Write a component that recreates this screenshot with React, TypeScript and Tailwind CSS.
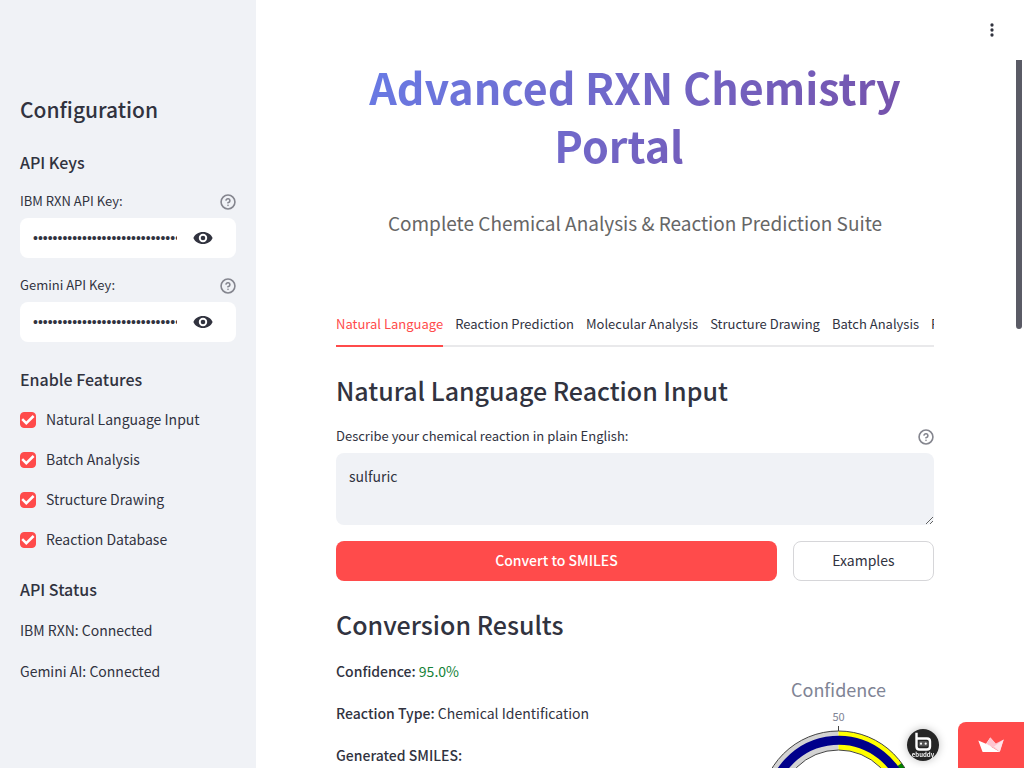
import { useState } from "react";
import type { ReactNode } from "react";

const tabs = [
  "Natural Language",
  "Reaction Prediction",
  "Molecular Analysis",
  "Structure Drawing",
  "Batch Analysis",
  "Reaction Database",
];

const features = [
  "Natural Language Input",
  "Batch Analysis",
  "Structure Drawing",
  "Reaction Database",
];

function HelpButton({ label }: { label: string }) {
  return (
    <button type="button" aria-label={label} className="flex pt-[2px] text-[#84858e]">
      <svg
        className="size-4"
        viewBox="0 0 24 24"
        fill="none"
        stroke="currentColor"
        strokeWidth="2.4"
        strokeLinecap="round"
        strokeLinejoin="round"
      >
        <circle cx="12" cy="12" r="10.4" />
        <path d="M9.1 9a3 3 0 0 1 5.8 1c0 2-3 3-3 3" />
        <path d="M12 17h.01" />
      </svg>
    </button>
  );
}

function SideHeading({ children }: { children: ReactNode }) {
  return <h3 className="text-base leading-6 font-medium">{children}</h3>;
}

function PasswordField({ id, label }: { id: string; label: string }) {
  const [shown, setShown] = useState(false);
  return (
    <div>
      <div className="flex h-5 items-center justify-between">
        <label htmlFor={id} className="text-[13px] leading-5">
          {label}
        </label>
        <HelpButton label={`Help for ${label}`} />
      </div>
      <div className="mt-[7px] flex h-10 items-center rounded-lg bg-white pr-[23px] pl-[13px]">
        <input
          id={id}
          type={shown ? "text" : "password"}
          defaultValue="0000000000000000000000000000000000000000"
          className="min-w-0 flex-1 bg-transparent font-['Liberation_Sans',sans-serif] text-sm outline-none"
        />
        <button
          type="button"
          aria-label="Show password text"
          onClick={() => setShown(!shown)}
          className="ml-4 flex"
        >
          <svg className="h-3 w-5" viewBox="0 0 20 12">
            <path
              fill="currentColor"
              fillRule="evenodd"
              d="M10 0C5.400 0 1.800 2.400 0.400 6C1.800 9.600 5.400 12 10 12S18.200 9.600 19.600 6C18.200 2.400 14.600 0 10 0ZM10 10.200A4.200 4.200 0 1 1 10 1.800A4.200 4.200 0 0 1 10 10.200ZM10 3.700A2.300 2.300 0 1 0 10 8.300A2.300 2.300 0 0 0 10 3.700Z"
            />
          </svg>
        </button>
      </div>
    </div>
  );
}

function Feature({ label }: { label: string }) {
  return (
    <label className="flex h-6 items-start gap-[10px] text-sm leading-[22px]">
      <span className="mt-1 grid">
        <input
          type="checkbox"
          defaultChecked
          className="peer col-start-1 row-start-1 size-4 appearance-none rounded-sm border border-gray-300 bg-white checked:border-[#ff4b4b] checked:bg-[#ff4b4b]"
        />
        <svg
          className="pointer-events-none invisible col-start-1 row-start-1 size-4 peer-checked:visible"
          viewBox="0 0 16 16"
          fill="none"
          stroke="white"
          strokeWidth="2.5"
        >
          <path d="M2.200 7.200L6.300 11.200L13.600 4" />
        </svg>
      </span>
      {label}
    </label>
  );
}

function Gauge() {
  return (
    <svg
      role="img"
      aria-label="Confidence gauge"
      className="h-[200px] w-full"
      viewBox="0 -1 194 200"
    >
      <text x="98.500" y="37" textAnchor="middle" fontSize="18" fill="#808495">
        Confidence
      </text>
      <text x="98.500" y="61" textAnchor="middle" fontSize="11" fill="#808495">
        50
      </text>
      <path d="M98.500 66V71" stroke="#444" />
      <g fill="none" strokeWidth="19">
        <path d="M30 149A68.500 68.500 0 0 1 98.500 80.500" stroke="#d3d3d3" />
        <path d="M98.500 80.500A68.500 68.500 0 0 1 153.900 108.700" stroke="#ffff00" />
        <path d="M153.900 108.700A68.500 68.500 0 0 1 167 149" stroke="#008000" />
      </g>
      <path
        d="M30 149A68.500 68.500 0 0 1 166.200 138.300"
        fill="none"
        stroke="#00008b"
        strokeWidth="9"
      />
      <path
        d="M20.500 149A78 78 0 0 1 176.500 149H157.500A59 59 0 0 0 39.500 149Z"
        fill="none"
        stroke="#444"
      />
    </svg>
  );
}

export default function App() {
  const [active, setActive] = useState(0);
  return (
    <div className="flex h-screen overflow-hidden bg-white font-['Noto_Sans_CJK_JP',sans-serif] text-[#31333f]">
      <aside className="w-64 shrink-0 bg-[#f0f2f6] px-5 pt-[93px]">
        <h2 className="text-[21px] leading-8 font-medium">Configuration</h2>
        <div className="mt-[25px]">
          <SideHeading>API Keys</SideHeading>
          <div className="mt-[17px] flex flex-col gap-[17px]">
            <PasswordField id="rxn-key" label="IBM RXN API Key:" />
            <PasswordField id="gemini-key" label="Gemini API Key:" />
          </div>
        </div>
        <div className="mt-[25px]">
          <SideHeading>Enable Features</SideHeading>
          <div className="mt-[17px] flex flex-col gap-4">
            {features.map((f) => (
              <Feature key={f} label={f} />
            ))}
          </div>
        </div>
        <div className="mt-[25px]">
          <SideHeading>API Status</SideHeading>
          <div className="mt-[17px] flex flex-col gap-[17px] text-sm leading-6">
            <p>IBM RXN: Connected</p>
            <p>Gemini AI: Connected</p>
          </div>
        </div>
      </aside>

      <main className="min-w-0 flex-1 px-20 pt-[57px]">
        <h1 className="bg-linear-135 from-[#667eea] to-[#764ba2] bg-clip-text text-center text-[43px] leading-[58px] font-bold text-transparent">
          Advanced RXN Chemistry Portal
          <span aria-hidden="true" className="inline-block w-8" />
        </h1>
        <p className="mt-[34px] text-center text-[19px] leading-8 text-[#666666]">
          Complete Chemical Analysis &amp; Reaction Prediction Suite
        </p>

        <div
          role="tablist"
          className="mt-[66px] flex gap-3 overflow-hidden text-[13px] shadow-[inset_0_-2px_0_#e9e9eb]"
        >
          {tabs.map((t, i) => (
            <button
              key={t}
              type="button"
              role="tab"
              aria-selected={i === active}
              onClick={() => setActive(i)}
              className={
                i === active
                  ? "h-[42px] shrink-0 border-b-2 border-[#ff4b4b] pb-[2px] whitespace-nowrap text-[#ff4b4b]"
                  : "h-[42px] shrink-0 border-b-2 border-transparent pb-[2px] whitespace-nowrap"
              }
            >
              {t}
            </button>
          ))}
        </div>

        <h2 className="mt-[25px] text-[25px] leading-9 font-medium">
          Natural Language Reaction Input
        </h2>
        <div className="mt-[18px] flex h-5 items-center justify-between">
          <label htmlFor="reaction" className="text-[13px] leading-5">
            Describe your chemical reaction in plain English:
          </label>
          <HelpButton label="Help for reaction description" />
        </div>
        <textarea
          id="reaction"
          defaultValue="sulfuric"
          className="mt-[7px] block h-[72px] w-full resize-y rounded-lg bg-[#f0f2f6] px-[13px] py-[11px] text-sm leading-6 outline-none"
        />
        <div className="mt-4 grid grid-cols-[25fr_8fr] gap-4 text-sm">
          <button
            type="button"
            className="h-10 rounded-lg bg-[#ff4b4b] pb-[2px] font-medium text-white"
          >
            Convert to SMILES
          </button>
          <button
            type="button"
            className="h-10 rounded-lg border border-[#d6d6d9] bg-white pb-[2px]"
          >
            Examples
          </button>
        </div>

        <h2 className="mt-[25px] text-[25px] leading-9 font-medium">
          Conversion Results
        </h2>
        <div className="mt-[17px] grid grid-cols-[2fr_1fr] gap-4">
          <div className="flex flex-col gap-[18px] text-sm leading-6">
            <p>
              <strong className="font-medium">Confidence:</strong>{" "}
              <span className="text-[#158237]">95.0%</span>
            </p>
            <p>
              <strong className="font-medium">Reaction Type:</strong> Chemical
              Identification
            </p>
            <p>
              <strong className="font-medium">Generated SMILES:</strong>
            </p>
          </div>
          <Gauge />
        </div>
      </main>

      <div className="flex w-[10px] shrink-0 justify-center pt-[60px]">
        <div className="h-[269px] w-[6px] rounded-b-full bg-[#5a5b65]" />
      </div>

      <button
        type="button"
        aria-label="Main menu"
        className="fixed top-5 right-[22px] flex size-5 items-center justify-center"
      >
        <svg className="size-5" viewBox="0 0 20 20" fill="currentColor">
          <circle cx="10" cy="5" r="1.650" />
          <circle cx="10" cy="10" r="1.650" />
          <circle cx="10" cy="15" r="1.650" />
        </svg>
      </button>

      <div className="fixed right-0 bottom-0 flex items-end">
        <a
          href="#profile"
          aria-label="Creator profile"
          className="mr-[19px] mb-[7px] flex size-8 rounded-full shadow-[0_0_8px_rgba(0,0,0,0.25)]"
        >
          <svg className="size-8" viewBox="0 0 32 32">
            <circle cx="16" cy="16" r="16" fill="#252525" />
            <path
              d="M9.500 3.800V17.500Q9.500 20.500 12.500 20.500H20Q23 20.500 23 17.500V12.500Q23 9.500 20 9.500H9.500"
              fill="none"
              stroke="#fff"
              strokeWidth="2.4"
              strokeLinejoin="round"
            />
            <rect x="11.800" y="12" width="9" height="5.500" rx="1.500" fill="#555" />
            <circle cx="14" cy="14.700" r="1.100" fill="#fff" />
            <circle cx="18.700" cy="14.700" r="1.100" fill="#fff" />
            <text
              x="16"
              y="27.500"
              textAnchor="middle"
              fontSize="6"
              fontWeight="700"
              fill="#eee"
            >
              ebuddy
            </text>
          </svg>
        </a>
        <a
          href="#host"
          aria-label="Hosted with Streamlit"
          className="flex h-[46px] w-[66px] items-center justify-center rounded-tl-lg bg-[#ff4b4b]"
        >
          <svg className="h-4 w-[26px]" viewBox="0 0 26 16">
            <path d="M12.300 0.500L18.500 8L12 10L8 6.800Z" fill="#fff" />
            <path d="M12.300 0.500L17.800 6.500L25.700 2.500L21.800 14.800L8.500 6.800Z" fill="#ffc4d0" />
            <path d="M25.700 2.500L21.800 14.800L16 9.500Z" fill="#ffe3e8" />
            <path d="M0.300 3.500L8.500 7L22 15H5.200Q4.600 15 4.400 14.400Z" fill="#fff" />
          </svg>
        </a>
      </div>
    </div>
  );
}
